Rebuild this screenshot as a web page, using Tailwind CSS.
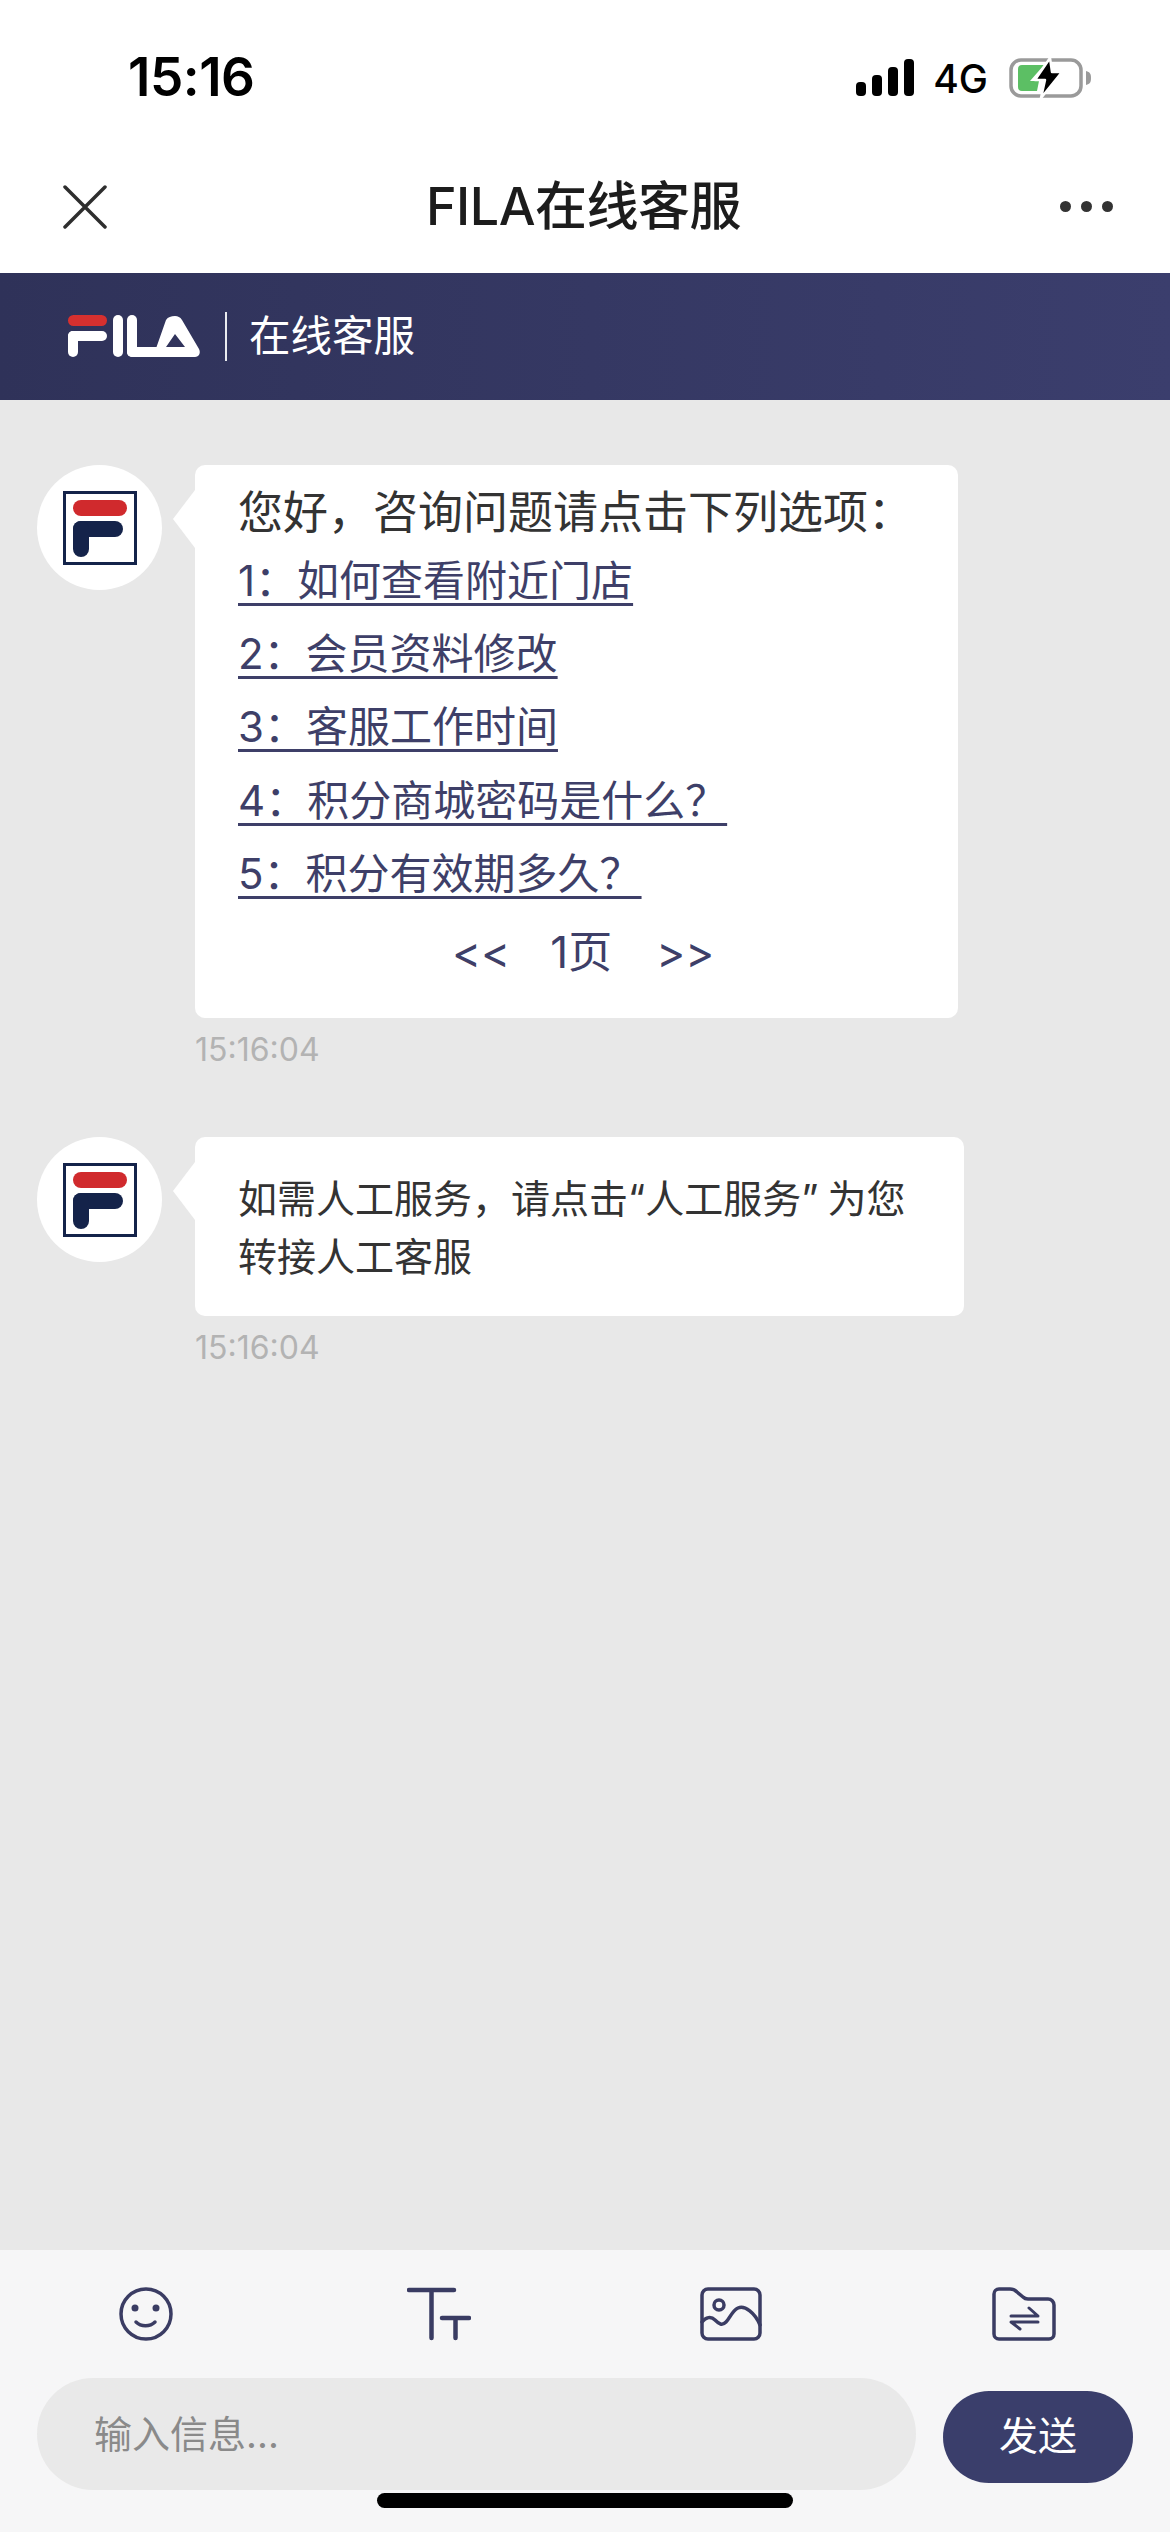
<!DOCTYPE html>
<html lang="zh-CN">
<head>
  <meta charset="UTF-8" />
  <meta name="viewport" content="width=device-width, initial-scale=1.0" />
  <title>FILA在线客服</title>
  <script src="https://cdn.jsdelivr.net/npm/@tailwindcss/browser@4"></script>
</head>
<body class="bg-white">
  <div class="relative w-[1170px] h-[2532px] flex flex-col overflow-hidden font-['Inter','Noto_Sans_CJK_SC',sans-serif]">

    <!-- Status bar -->
    <div class="h-[140px] pt-[16px] pl-[128px] pr-[77px] flex items-center justify-between shrink-0">
      <span class="text-[53px] font-semibold text-black tracking-[-0.5px]">15:16</span>
      <div class="flex items-center">
        <svg width="58" height="37" viewBox="0 0 58 37" class="mt-[-1px]">
          <rect x="0" y="23" width="10" height="14" rx="4" fill="#000" />
          <rect x="16" y="16" width="10" height="21" rx="4" fill="#000" />
          <rect x="32" y="8" width="10" height="29" rx="4" fill="#000" />
          <rect x="48" y="0" width="10" height="37" rx="4" fill="#000" />
        </svg>
        <span class="ml-[19px] text-[39px] font-medium text-black leading-none">4G</span>
        <svg width="84" height="42" viewBox="0 0 84 42" class="ml-[21px]">
          <rect x="2" y="3" width="70" height="36" rx="10" fill="#fff" stroke="#9a9a9a" stroke-width="3.5" />
          <path d="M9 12a4 4 0 0 1 4-4h22L21 24h9l-2 10H13a4 4 0 0 1-4-4z" fill="#5cbf64" />
          <path d="M41 1 26 23h10l-4 18 21-26H43z" fill="#000" stroke="#fff" stroke-width="2.5" stroke-linejoin="round" />
          <path d="M77 14c4 1 5 3 5 7s-1 6-5 7z" fill="#9a9a9a" />
        </svg>
      </div>
    </div>

    <!-- Nav -->
    <div class="h-[133px] pl-[63px] pr-[57px] flex items-center justify-between shrink-0">
      <svg width="44" height="44" viewBox="0 0 44 44" fill="none" stroke="#2e2e2e" stroke-width="3.5" stroke-linecap="round">
        <path d="M2 2 42 42M42 2 2 42" />
      </svg>
      <span class="text-[52px] font-medium text-[#1c1c1c] leading-none tracking-[-0.5px]">FILA在线客服</span>
      <div class="flex gap-[10px]">
        <span class="w-[11px] h-[11px] rounded-full bg-[#333]"></span>
        <span class="w-[11px] h-[11px] rounded-full bg-[#333]"></span>
        <span class="w-[11px] h-[11px] rounded-full bg-[#333]"></span>
      </div>
    </div>

    <!-- Brand banner -->
    <div class="h-[127px] pl-[67px] flex items-center shrink-0 bg-gradient-to-r from-[#2f3259] to-[#3b3e6d]">
      <svg width="134" height="43" viewBox="0 0 134 43">
        <rect x="1" y="0" width="39" height="11" rx="5.5" fill="#d6302f" />
        <rect x="1" y="16" width="39" height="10" rx="5" fill="#fff" />
        <rect x="1" y="16" width="10" height="26" rx="5" fill="#fff" />
        <rect x="46" y="0" width="10" height="42" rx="5" fill="#fff" />
        <rect x="60" y="0" width="10" height="42" rx="5" fill="#fff" />
        <rect x="60" y="32" width="40" height="10" rx="5" fill="#fff" />
        <path fill-rule="evenodd" fill="#fff" d="M108 1c3 0 5 1 7 4l17 29c2 4 0 8-4 8H86l13-37c2-3 5-4 9-4zM108 19l-9 13h19z" />
      </svg>
      <div class="w-[2px] h-[49px] bg-white/90 ml-[24px]"></div>
      <span class="ml-[22px] text-[41.500px] text-white leading-none">在线客服</span>
    </div>

    <!-- Messages -->
    <div class="flex-1 bg-[#e8e8e8] pt-[65px] pl-[37px] flex flex-col gap-[69px]">
      <div class="flex items-start">
        <div class="w-[125px] h-[125px] rounded-full bg-white flex items-center justify-center shrink-0">
          <svg width="74" height="74" viewBox="0 0 74 74">
            <rect x="1.5" y="1.5" width="71" height="71" fill="#fff" stroke="#14234a" stroke-width="3" />
            <rect x="10" y="9" width="54" height="16" rx="8" fill="#d02a2d" />
            <rect x="10" y="30" width="50" height="16" rx="8" fill="#14234a" />
            <rect x="10" y="30" width="16" height="36" rx="8" fill="#14234a" />
          </svg>
        </div>
        <div class="ml-[33px]">
          <div class="relative w-[763px] h-[553px] bg-white rounded-[10px] pt-[14px] pl-[43px] pr-[20px] text-[#3e3f68]">
            <div class="absolute left-[-22px] top-[25px] w-0 h-0 border-y-[29px] border-y-transparent border-r-[22px] border-r-white"></div>
            <p class="h-[68px] leading-[68px] text-[45px] text-[#333] whitespace-nowrap">您好&#xFF0C;咨询问题请点击下列选项&#xFF1A;</p>
            <ul class="text-[42px] leading-[73.2px] mt-[-3px]">
              <li><a class="underline decoration-[3px] underline-offset-[7px]">1&#xFF1A;如何查看附近门店</a></li>
              <li><a class="underline decoration-[3px] underline-offset-[7px]">2&#xFF1A;会员资料修改</a></li>
              <li><a class="underline decoration-[3px] underline-offset-[7px]">3&#xFF1A;客服工作时间</a></li>
              <li><a class="underline decoration-[3px] underline-offset-[7px]">4&#xFF1A;积分商城密码是什么&#xFF1F;</a></li>
              <li><a class="underline decoration-[3px] underline-offset-[7px]">5&#xFF1A;积分有效期多久&#xFF1F;</a></li>
            </ul>
            <div class="h-[84px] pl-[214px] flex items-center text-[44px] whitespace-nowrap">
              <span>&lt;&lt;</span>
              <span class="ml-[40px]">1页</span>
              <span class="ml-[44px]">&gt;&gt;</span>
            </div>
          </div>
          <p class="mt-[14px] text-[32px] leading-[36px] text-[#b3b3b3]">15:16:04</p>
        </div>
      </div>

      <div class="flex items-start">
        <div class="w-[125px] h-[125px] rounded-full bg-white flex items-center justify-center shrink-0">
          <svg width="74" height="74" viewBox="0 0 74 74">
            <rect x="1.5" y="1.5" width="71" height="71" fill="#fff" stroke="#14234a" stroke-width="3" />
            <rect x="10" y="9" width="54" height="16" rx="8" fill="#d02a2d" />
            <rect x="10" y="30" width="50" height="16" rx="8" fill="#14234a" />
            <rect x="10" y="30" width="16" height="36" rx="8" fill="#14234a" />
          </svg>
        </div>
        <div class="ml-[33px]">
          <div class="relative w-[769px] h-[179px] bg-white rounded-[10px] pt-[33px] pl-[43px] text-[39px] leading-[58px] text-[#333]">
            <div class="absolute left-[-22px] top-[25px] w-0 h-0 border-y-[29px] border-y-transparent border-r-[22px] border-r-white"></div>
            <p class="whitespace-nowrap">如需人工服务&#xFF0C;请点击“人工服务<span class="mr-[9px]">”</span>为您<br />转接人工客服</p>
          </div>
          <p class="mt-[14px] text-[32px] leading-[36px] text-[#b3b3b3]">15:16:04</p>
        </div>
      </div>
    </div>

    <!-- Footer -->
    <div class="h-[282px] bg-[#f6f6f7] shrink-0 pt-[37px]">
      <div class="grid grid-cols-4 h-[53px]">
        <div class="flex justify-center">
          <svg width="54" height="54" viewBox="0 0 54 54" fill="none" stroke="#3a3c63" stroke-width="3.5" stroke-linecap="round">
            <circle cx="27" cy="27" r="25" />
            <circle cx="16" cy="21" r="3.5" fill="#3a3c63" stroke="none" />
            <circle cx="37" cy="21" r="3.5" fill="#3a3c63" stroke="none" />
            <path d="M17 35c5 5 14 5 19 0" />
          </svg>
        </div>
        <div class="flex justify-center">
          <svg width="64" height="54" viewBox="0 0 64 54" fill="none" stroke="#3a3c63" stroke-linecap="round">
            <path d="M2 3H47M24.500 3V51" stroke-width="4.500" />
            <path d="M35 31H62M48.500 31V51" stroke-width="4.500" />
          </svg>
        </div>
        <div class="flex justify-center">
          <svg width="62" height="54" viewBox="0 0 62 54" fill="none" stroke="#3a3c63" stroke-width="3.500" stroke-linecap="round" stroke-linejoin="round">
            <rect x="2" y="2" width="58" height="50" rx="6" />
            <circle cx="19" cy="18" r="5" />
            <path d="M2 35c4-5 9-6 13-2s7 6 11 2 6-11 12-14c7-3 17 5 22 17" />
          </svg>
        </div>
        <div class="flex justify-center">
          <svg width="64" height="54" viewBox="0 0 64 54" fill="none" stroke="#3a3c63" stroke-width="3.500" stroke-linecap="round" stroke-linejoin="round">
            <path d="M2 7a5 5 0 0 1 5-5h11c3 0 5 1 7 3l6 5c1 1 3 2 5 2h20a6 6 0 0 1 6 6v29a5 5 0 0 1-5 5H7a5 5 0 0 1-5-5z" />
            <path d="M19 29H46L37 21M46 35H19L28 42" stroke-width="3" />
          </svg>
        </div>
      </div>
      <div class="mt-[38px] pl-[37px] flex items-center">
        <div class="w-[879px] h-[112px] rounded-full bg-[#e9e9e9] pl-[57px] flex items-center text-[38px] text-[#8a8a8a]">输入信息...</div>
        <button class="ml-[27px] w-[190px] h-[92px] mt-[5px] rounded-full bg-[#3a3e6b] text-white text-[39px]">发送</button>
      </div>
    </div>

    <!-- Home indicator -->
    <div class="absolute left-[377px] top-[2493px] w-[416px] h-[15px] rounded-full bg-black"></div>
  </div>
</body>
</html>
